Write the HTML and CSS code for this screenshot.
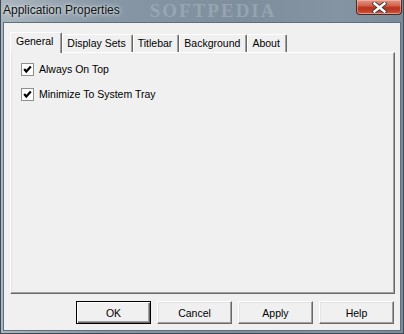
FILE: index.html
```html
<!DOCTYPE html>
<html lang="en">
<head>
  <meta charset="UTF-8">
  <title>Application Properties</title>
  <link rel="stylesheet" href="styles.css">
</head>
<body>
  <div class="window">
    <div class="titlebar">
      <span class="title">Application Properties</span>
      <span class="watermark">SOFTPEDIA</span>
      <button type="button" class="close">
        <svg width="15" height="11" viewBox="0 0 15 11">
          <path d="M2.5 1.5 L12.5 9.5 M12.5 1.5 L2.5 9.5" stroke="#3b3b3b" stroke-width="4.2" stroke-linecap="square"/>
          <path d="M2.5 1.5 L12.5 9.5 M12.5 1.5 L2.5 9.5" stroke="#ffffff" stroke-width="2.4" stroke-linecap="square"/>
        </svg>
      </button>
    </div>

    <div class="client">
      <div class="tabs">
        <div class="tab active">General</div>
        <div class="tab">Display Sets</div>
        <div class="tab">Titlebar</div>
        <div class="tab">Background</div>
        <div class="tab">About</div>
      </div>

      <div class="panel">
        <label class="check">
          <span class="box">
            <svg width="9" height="9" viewBox="0 0 9 9">
              <path d="M1.2 4 L3.3 6.6 L7.8 1.6" fill="none" stroke="#000" stroke-width="2.2"/>
            </svg>
          </span>
          Always On Top
        </label>
        <label class="check">
          <span class="box">
            <svg width="9" height="9" viewBox="0 0 9 9">
              <path d="M1.2 4 L3.3 6.6 L7.8 1.6" fill="none" stroke="#000" stroke-width="2.2"/>
            </svg>
          </span>
          Minimize To System Tray
        </label>
      </div>

      <div class="buttons">
        <button type="button" class="btn default">OK</button>
        <button type="button" class="btn">Cancel</button>
        <button type="button" class="btn">Apply</button>
        <button type="button" class="btn">Help</button>
      </div>
    </div>
  </div>
</body>
</html>
```

FILE: styles.css
```css
* {
  box-sizing: border-box;
}

body {
  margin: 0;
  background-color: #7f8e9c;
  font-family: "Liberation Sans", Arial, sans-serif;
}

.window {
  width: 404px;
  height: 334px;
  display: flex;
  flex-direction: column;
  background: linear-gradient(to right, #aab5be 0%, #8797a5 25%, #7e8e9c 60%, #8494a2 85%, #7a8a98 100%);
  border-left: 1px solid #3f4b56;
  border-right: 1px solid #3f4b56;
  border-bottom: 1px solid #3f4b56;
}

.titlebar {
  height: 22px;
  display: flex;
  align-items: flex-start;
  overflow: hidden;
}

.title {
  padding: 3px 0 0 2px;
  font-size: 12px;
  line-height: 14px;
  color: #111;
  text-shadow: 0 0 6px #d8dfe5, 0 0 3px #e6ebef;
  white-space: nowrap;
}

.watermark {
  margin: 0 0 0 30px;
  font-family: "Liberation Serif", serif;
  font-weight: bold;
  font-size: 19px;
  line-height: 21px;
  letter-spacing: 2px;
  color: rgba(172, 186, 198, 0.5);
  white-space: nowrap;
}

.close {
  margin-left: auto;
  margin-right: 1px;
  width: 46px;
  height: 15px;
  padding: 0;
  border: 1px solid #4e2a25;
  border-top: none;
  border-radius: 0 0 4px 4px;
  background: linear-gradient(to bottom, #e29685 0%, #d0634e 40%, #b9321a 55%, #c3452b 85%, #d56f59 100%);
  box-shadow: inset 0 0 0 1px rgba(255, 210, 200, 0.45);
  display: flex;
  align-items: center;
  justify-content: center;
}

.client {
  flex: 1;
  margin: 0 2px 2px 2px;
  background-color: #f0f0f0;
  border: 1px solid #5f6e7b;
  padding: 9px 5px 0 6px;
  display: flex;
  flex-direction: column;
  font-size: 10.5px;
  color: #000;
}

.tabs {
  height: 20px;
  display: flex;
  align-items: flex-end;
}

.tab {
  height: 18px;
  padding: 2px 6px 0 4px;
  line-height: 13px;
  white-space: nowrap;
  border-top: 1px solid #fff;
  border-left: 1px solid #fff;
  border-right: 1px solid #696969;
  border-radius: 2px 2px 0 0;
  box-shadow: inset -1px 0 #a0a0a0;
}

.tab.active {
  position: relative;
  z-index: 1;
  height: 21px;
  margin-bottom: -1px;
  padding: 2px 8px 0 5px;
  background-color: #f0f0f0;
}

.panel {
  height: 242px;
  border: 1px solid;
  border-color: #fff #696969 #696969 #fff;
  box-shadow: inset -1px -1px #a0a0a0, inset 1px 0 #e3e3e3;
  padding: 10px 10px;
  display: flex;
  flex-direction: column;
  align-items: flex-start;
  gap: 12px;
}

.check {
  display: flex;
  align-items: center;
  gap: 5px;
  height: 13px;
  line-height: 13px;
  white-space: nowrap;
}

.box {
  width: 13px;
  height: 13px;
  border: 1px solid #8e8f8f;
  background-color: #fff;
  display: flex;
  align-items: center;
  justify-content: center;
}

.buttons {
  margin-top: 7px;
  padding-right: 1px;
  display: flex;
  justify-content: flex-end;
  gap: 6px;
}

.btn {
  width: 75px;
  height: 23px;
  padding: 0;
  font-family: "Liberation Sans", Arial, sans-serif;
  font-size: 10.5px;
  color: #000;
  background-color: #f0f0f0;
  border: 1px solid;
  border-color: #fff #696969 #696969 #fff;
  box-shadow: inset -1px -1px #a0a0a0, inset 1px 1px #e3e3e3;
}

.btn.default {
  border: 1px solid #000;
  box-shadow: inset 1px 1px #fff, inset -1px -1px #696969, inset -2px -2px #a0a0a0;
}
```
